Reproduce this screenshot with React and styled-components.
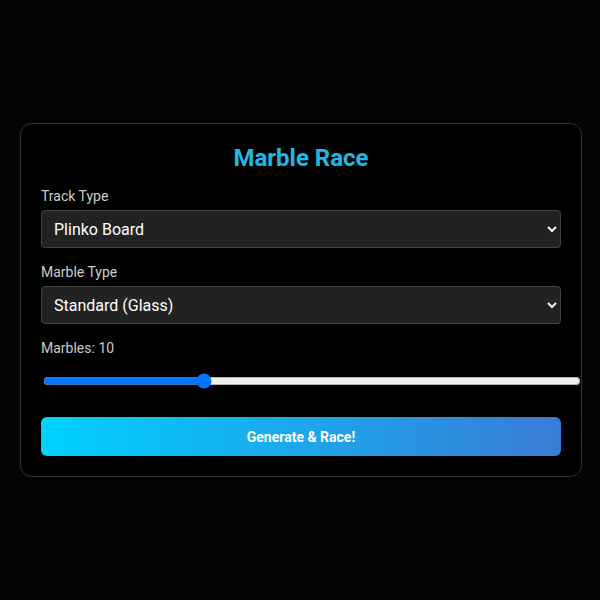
import { useState } from "react";
import styled, { createGlobalStyle } from "styled-components";

const GlobalStyle = createGlobalStyle`
  * { box-sizing: border-box; }
  html, body {
    margin: 0;
    padding: 0;
    background: #050505;
    font-family: Roboto, "Liberation Sans", Arial, sans-serif;
  }
`;

export default function App() {
  const [track, setTrack] = useState("plinko");
  const [marble, setMarble] = useState("glass");
  const [count, setCount] = useState(10);

  return (
    <Page>
      <GlobalStyle />
      <Card>
        <Title>Marble Race</Title>
        <Field>
          <Label>Track Type</Label>
          <Select value={track} onChange={(e) => setTrack(e.target.value)}>
            <option value="plinko">Plinko Board</option>
            <option value="spiral">Spiral Tower</option>
            <option value="zigzag">Zig Zag</option>
          </Select>
        </Field>
        <Field>
          <Label>Marble Type</Label>
          <Select value={marble} onChange={(e) => setMarble(e.target.value)}>
            <option value="glass">Standard (Glass)</option>
            <option value="steel">Heavy (Steel)</option>
            <option value="rubber">Bouncy (Rubber)</option>
          </Select>
        </Field>
        <Field>
          <Label>Marbles: {count}</Label>
          <Range
            type="range"
            min="3"
            max="26"
            value={count}
            onChange={(e) => setCount(Number(e.target.value))}
          />
        </Field>
        <Button>Generate &amp; Race!</Button>
      </Card>
    </Page>
  );
}

const Page = styled.div`
  min-height: 100vh;
  display: flex;
  align-items: center;
  justify-content: center;
  padding: 0 0 0 2px;
`;

const Card = styled.div`
  width: 562px;
  padding: 20px;
  background: #000;
  border: 1px solid #333;
  border-radius: 12px;
`;

const Title = styled.h1`
  margin: 0 0 16px;
  text-align: center;
  color: #1fb9e6;
  font-size: 24px;
  line-height: 28px;
  font-weight: 700;
`;

const Field = styled.div`
  margin-bottom: 16px;
`;

const Label = styled.label`
  display: block;
  margin-bottom: 5px;
  color: #cccccc;
  font-size: 14px;
  line-height: 17px;
`;

const Select = styled.select`
  display: block;
  width: 100%;
  height: 38px;
  padding: 0 8px;
  background: #222;
  color: #fff;
  border: 1px solid #444;
  border-radius: 4px;
  font-family: inherit;
  font-size: 16px;
  color-scheme: dark;
`;

const Range = styled.input`
  display: block;
  width: 100%;
  margin: 16px 0 0 2px;
  padding: 0 18px 0 0;
  box-sizing: content-box;
`;

const Button = styled.button`
  display: block;
  width: 100%;
  height: 39px;
  margin-top: 28px;
  border: none;
  border-radius: 6px;
  background: linear-gradient(90deg, #00d2ff, #3a7bd5);
  color: #fff;
  font-family: inherit;
  font-size: 14px;
  font-weight: 700;
  cursor: pointer;
`;
